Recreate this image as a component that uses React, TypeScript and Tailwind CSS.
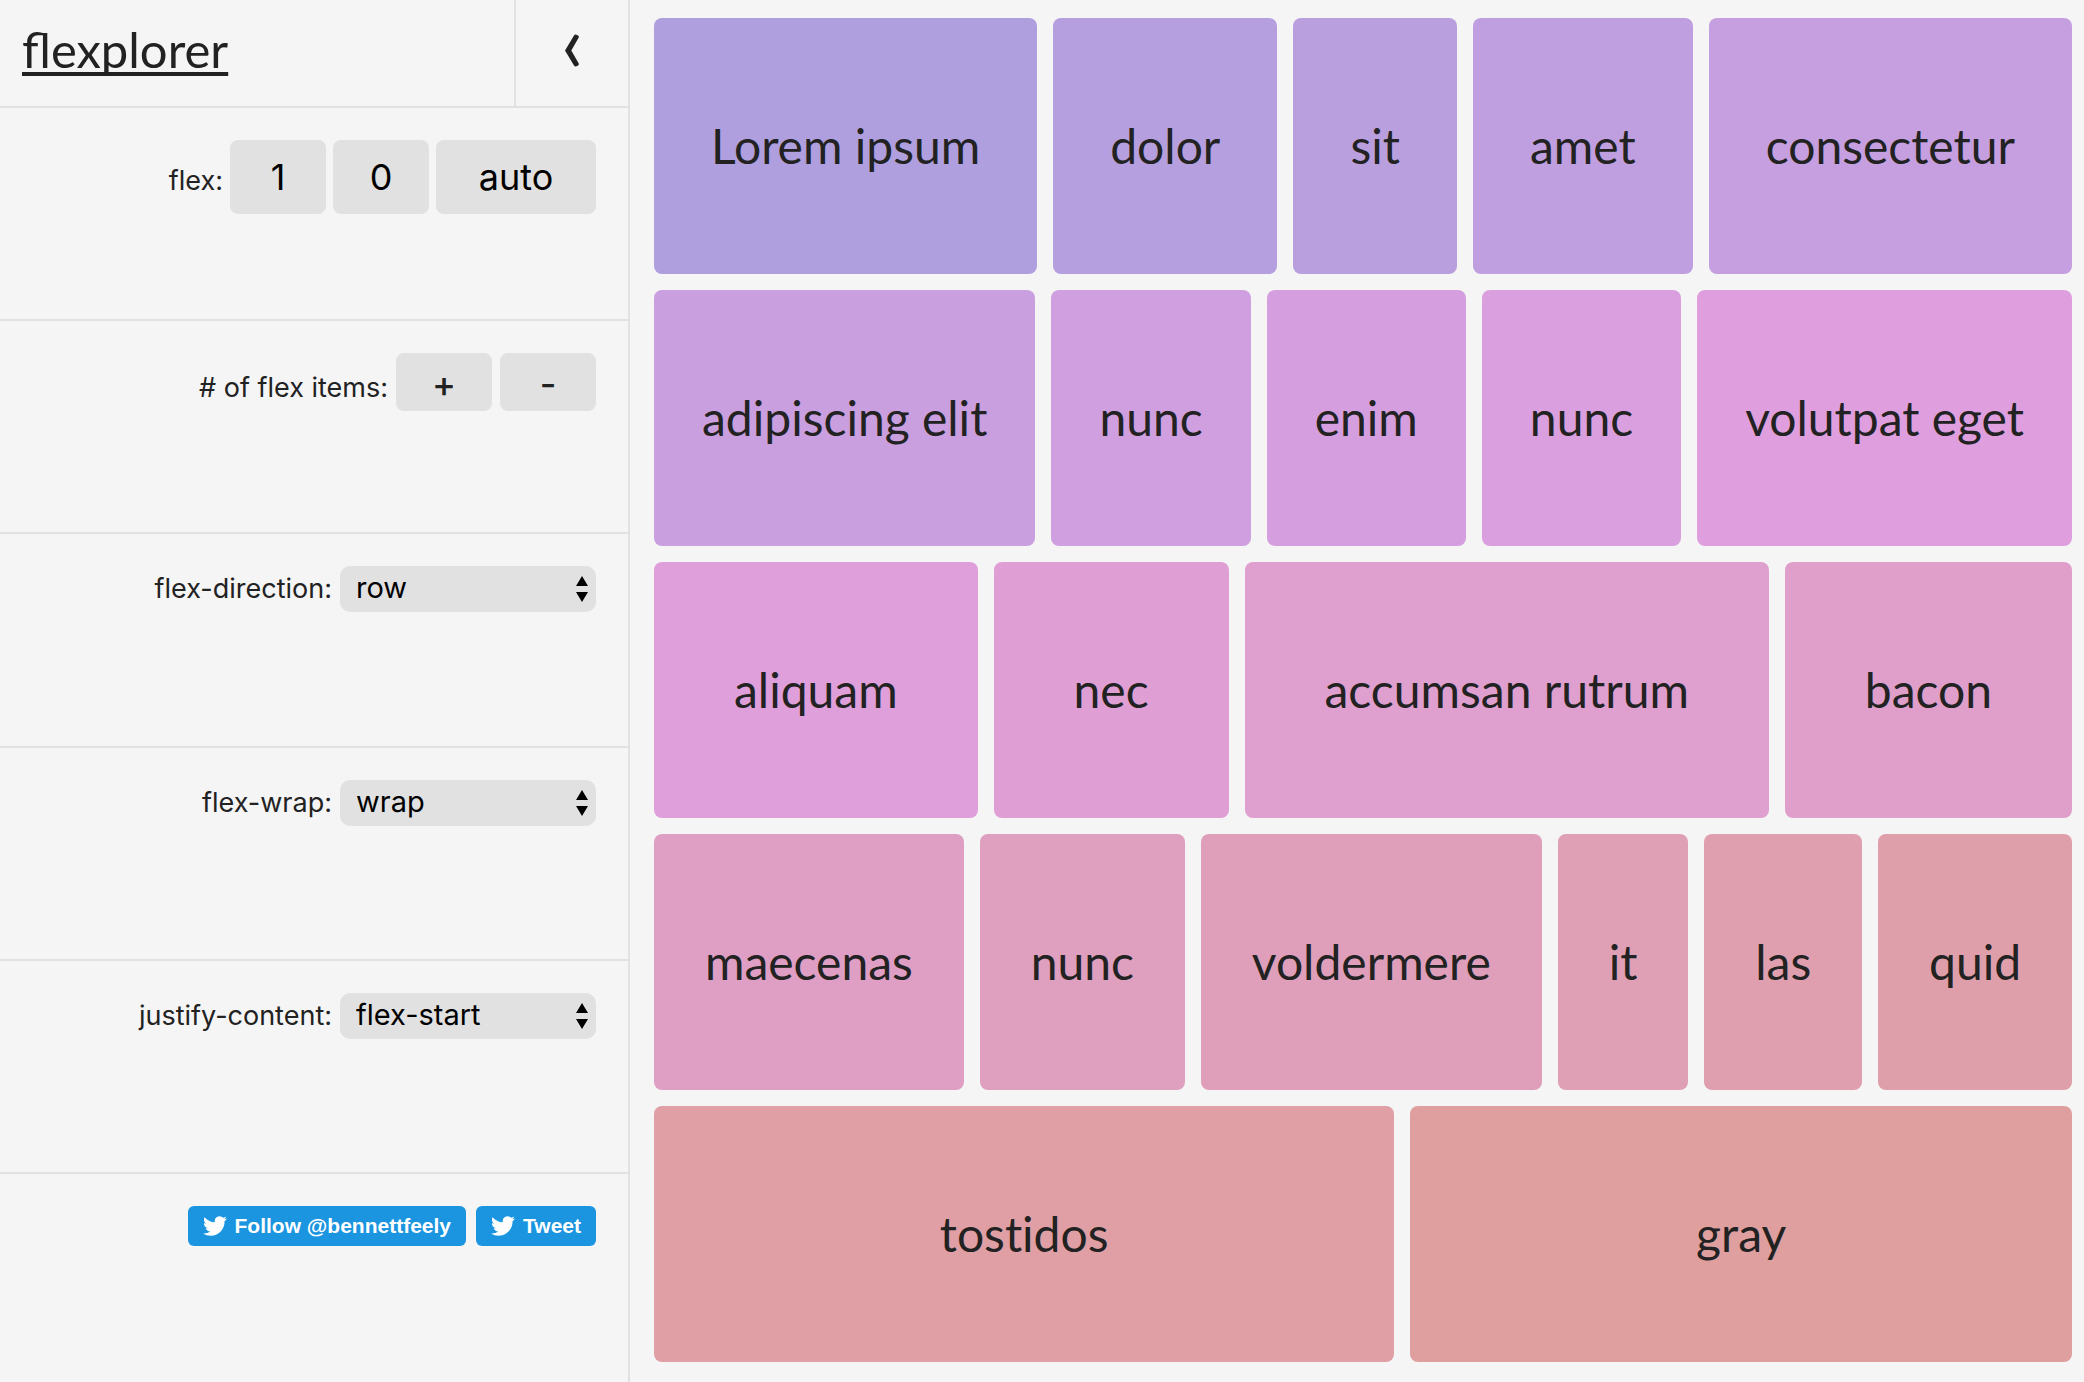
import { useState } from "react";
import type { ReactNode } from "react";

const WORDS = [
  "Lorem ipsum", "dolor", "sit", "amet", "consectetur",
  "adipiscing elit", "nunc", "enim", "nunc", "volutpat eget",
  "aliquam", "nec", "accumsan rutrum", "bacon",
  "maecenas", "nunc", "voldermere", "it", "las", "quid",
  "tostidos", "gray",
];

function Section({ children }: { children: ReactNode }) {
  return (
    <section className="flex items-start justify-end border-b-2 border-[#e1e1e1] pt-8 pr-8">
      {children}
    </section>
  );
}

function TextField({ label, value, onChange, wide }: { label: string; value: string; onChange: (v: string) => void; wide?: boolean }) {
  return (
    <input
      aria-label={label}
      value={value}
      onChange={(e) => onChange(e.target.value)}
      className={
        "h-[74px] rounded-lg bg-[#e1e1e1] text-center text-[36px] text-black outline-none " +
        (wide ? "w-40" : "w-24")
      }
    />
  );
}

function StepButton({ label, onClick, children }: { label: string; onClick: () => void; children: ReactNode }) {
  return (
    <button
      aria-label={label}
      onClick={onClick}
      className="h-[58px] w-24 rounded-lg bg-[#e1e1e1] pt-1 text-[36px] leading-9 font-medium"
    >
      {children}
    </button>
  );
}

function SelectField({ id, options, value, onChange }: { id: string; options: string[]; value: string; onChange: (v: string) => void }) {
  return (
    <div className="flex items-baseline gap-2">
      <label htmlFor={id} className="text-[27px] leading-9">{id}:</label>
      <div className="relative">
        <select
          id={id}
          value={value}
          onChange={(e) => onChange(e.target.value)}
          className="block h-[46px] w-64 appearance-none rounded-[10px] bg-[#e1e1e1] pr-8 pb-0.5 pl-4 text-[29px] leading-9 text-black outline-none"
        >
          {options.map((o) => (
            <option key={o}>{o}</option>
          ))}
        </select>
        <svg viewBox="0 0 12 26" className="pointer-events-none absolute top-[10px] right-2 h-[26px] w-3" aria-hidden="true">
          <path d="M6 0 12 10H0zM6 26 0 16h12z" fill="#000" />
        </svg>
      </div>
    </div>
  );
}

function Bird() {
  return (
    <svg viewBox="0 0 24 24" className="size-6" fill="#fff" aria-hidden="true">
      <path d="M23.954 4.569a10 10 0 0 1-2.825.775 4.958 4.958 0 0 0 2.163-2.723c-.951.555-2.005.959-3.127 1.184a4.92 4.92 0 0 0-8.384 4.482C7.691 8.094 4.066 6.13 1.64 3.161a4.822 4.822 0 0 0-.666 2.475c0 1.71.87 3.213 2.188 4.096a4.904 4.904 0 0 1-2.228-.616v.061a4.923 4.923 0 0 0 3.946 4.827 4.996 4.996 0 0 1-2.212.085 4.937 4.937 0 0 0 4.604 3.417 9.868 9.868 0 0 1-6.102 2.105c-.39 0-.779-.023-1.17-.067a13.995 13.995 0 0 0 7.557 2.209c9.054 0 13.999-7.496 13.999-13.986 0-.209 0-.42-.015-.63a9.936 9.936 0 0 0 2.46-2.548z" />
    </svg>
  );
}

export default function App() {
  const [grow, setGrow] = useState("1");
  const [shrink, setShrink] = useState("0");
  const [basis, setBasis] = useState("auto");
  const [count, setCount] = useState(WORDS.length);
  const [direction, setDirection] = useState("row");
  const [wrap, setWrap] = useState("wrap");
  const [justify, setJustify] = useState("flex-start");

  return (
    <div className="flex min-h-screen bg-[#f5f5f5] font-['Inter',sans-serif] text-[#222]">
      <aside className="flex w-[630px] shrink-0 flex-col border-r-2 border-[#e1e1e1]">
        <header className="flex h-[108px] shrink-0 border-b-2 border-[#e1e1e1]">
          <h1 className="flex-1 pt-[19px] pl-[22px] font-['Lato',sans-serif] text-[49px] leading-[60px]">
            <a href="#" className="underline decoration-4 underline-offset-4 [text-decoration-skip-ink:none]">flexplorer</a>
          </h1>
          <button aria-label="Collapse" className="flex w-[114px] items-center justify-center border-l-2 border-[#e1e1e1] pb-[6px]">
            <svg viewBox="0 0 14 33" className="h-[33px] w-[14px]" fill="#222" aria-hidden="true">
              <path d="M0 16.5 9 1.5Q10 0 11.5.7L13 1.5Q14.3 2.2 13.6 3.8L6.3 16.5 13.6 29.2Q14.3 30.8 13 31.5L11.5 32.3Q10 33 9 31.5z" />
            </svg>
          </button>
        </header>
        <div className="grid flex-1 grid-rows-[repeat(5,213fr)_208fr]">
          <Section>
            <div className="flex items-baseline gap-[7px]">
              <span className="text-[27px] leading-9">flex:</span>
              <TextField label="flex-grow" value={grow} onChange={setGrow} />
              <TextField label="flex-shrink" value={shrink} onChange={setShrink} />
              <TextField label="flex-basis" value={basis} onChange={setBasis} wide />
            </div>
          </Section>
          <Section>
            <div className="flex items-baseline gap-2">
              <span className="text-[27px] leading-9"># of flex items:</span>
              <StepButton label="Add item" onClick={() => setCount(count + 1)}>+</StepButton>
              <StepButton label="Remove item" onClick={() => setCount(Math.max(1, count - 1))}>-</StepButton>
            </div>
          </Section>
          <Section>
            <SelectField id="flex-direction" value={direction} onChange={setDirection} options={["row", "row-reverse", "column", "column-reverse"]} />
          </Section>
          <Section>
            <SelectField id="flex-wrap" value={wrap} onChange={setWrap} options={["wrap", "nowrap", "wrap-reverse"]} />
          </Section>
          <Section>
            <SelectField id="justify-content" value={justify} onChange={setJustify} options={["flex-start", "flex-end", "center", "space-between", "space-around"]} />
          </Section>
          <div className="flex items-start justify-end gap-[10px] pt-8 pr-8 font-['Liberation_Sans',sans-serif] text-[21px] font-bold text-white">
            <a href="#" className="flex h-10 items-center gap-2 rounded-md bg-[#1b95e0] px-[15px]"><Bird />Follow @bennettfeely</a>
            <a href="#" className="flex h-10 items-center gap-2 rounded-md bg-[#1b95e0] px-[15px]"><Bird />Tweet</a>
          </div>
        </div>
      </aside>
      <main
        className="flex min-w-0 flex-1 content-stretch gap-4 pt-[18px] pr-3 pb-5 pl-6 font-['Lato',sans-serif] text-[48px] [font-variant-ligatures:none]"
        style={{ flexDirection: direction as "row", flexWrap: wrap as "wrap", justifyContent: justify }}
      >
        {Array.from({ length: count }, (_, i) => (
          <div
            key={i}
            className="flex items-center justify-center rounded-lg px-12"
            style={{ flex: `${grow} ${shrink} ${basis}`, backgroundColor: `hsl(${255 + i * 5} 50% 75%)` }}
          >
            {WORDS[i % WORDS.length]}
          </div>
        ))}
      </main>
    </div>
  );
}
